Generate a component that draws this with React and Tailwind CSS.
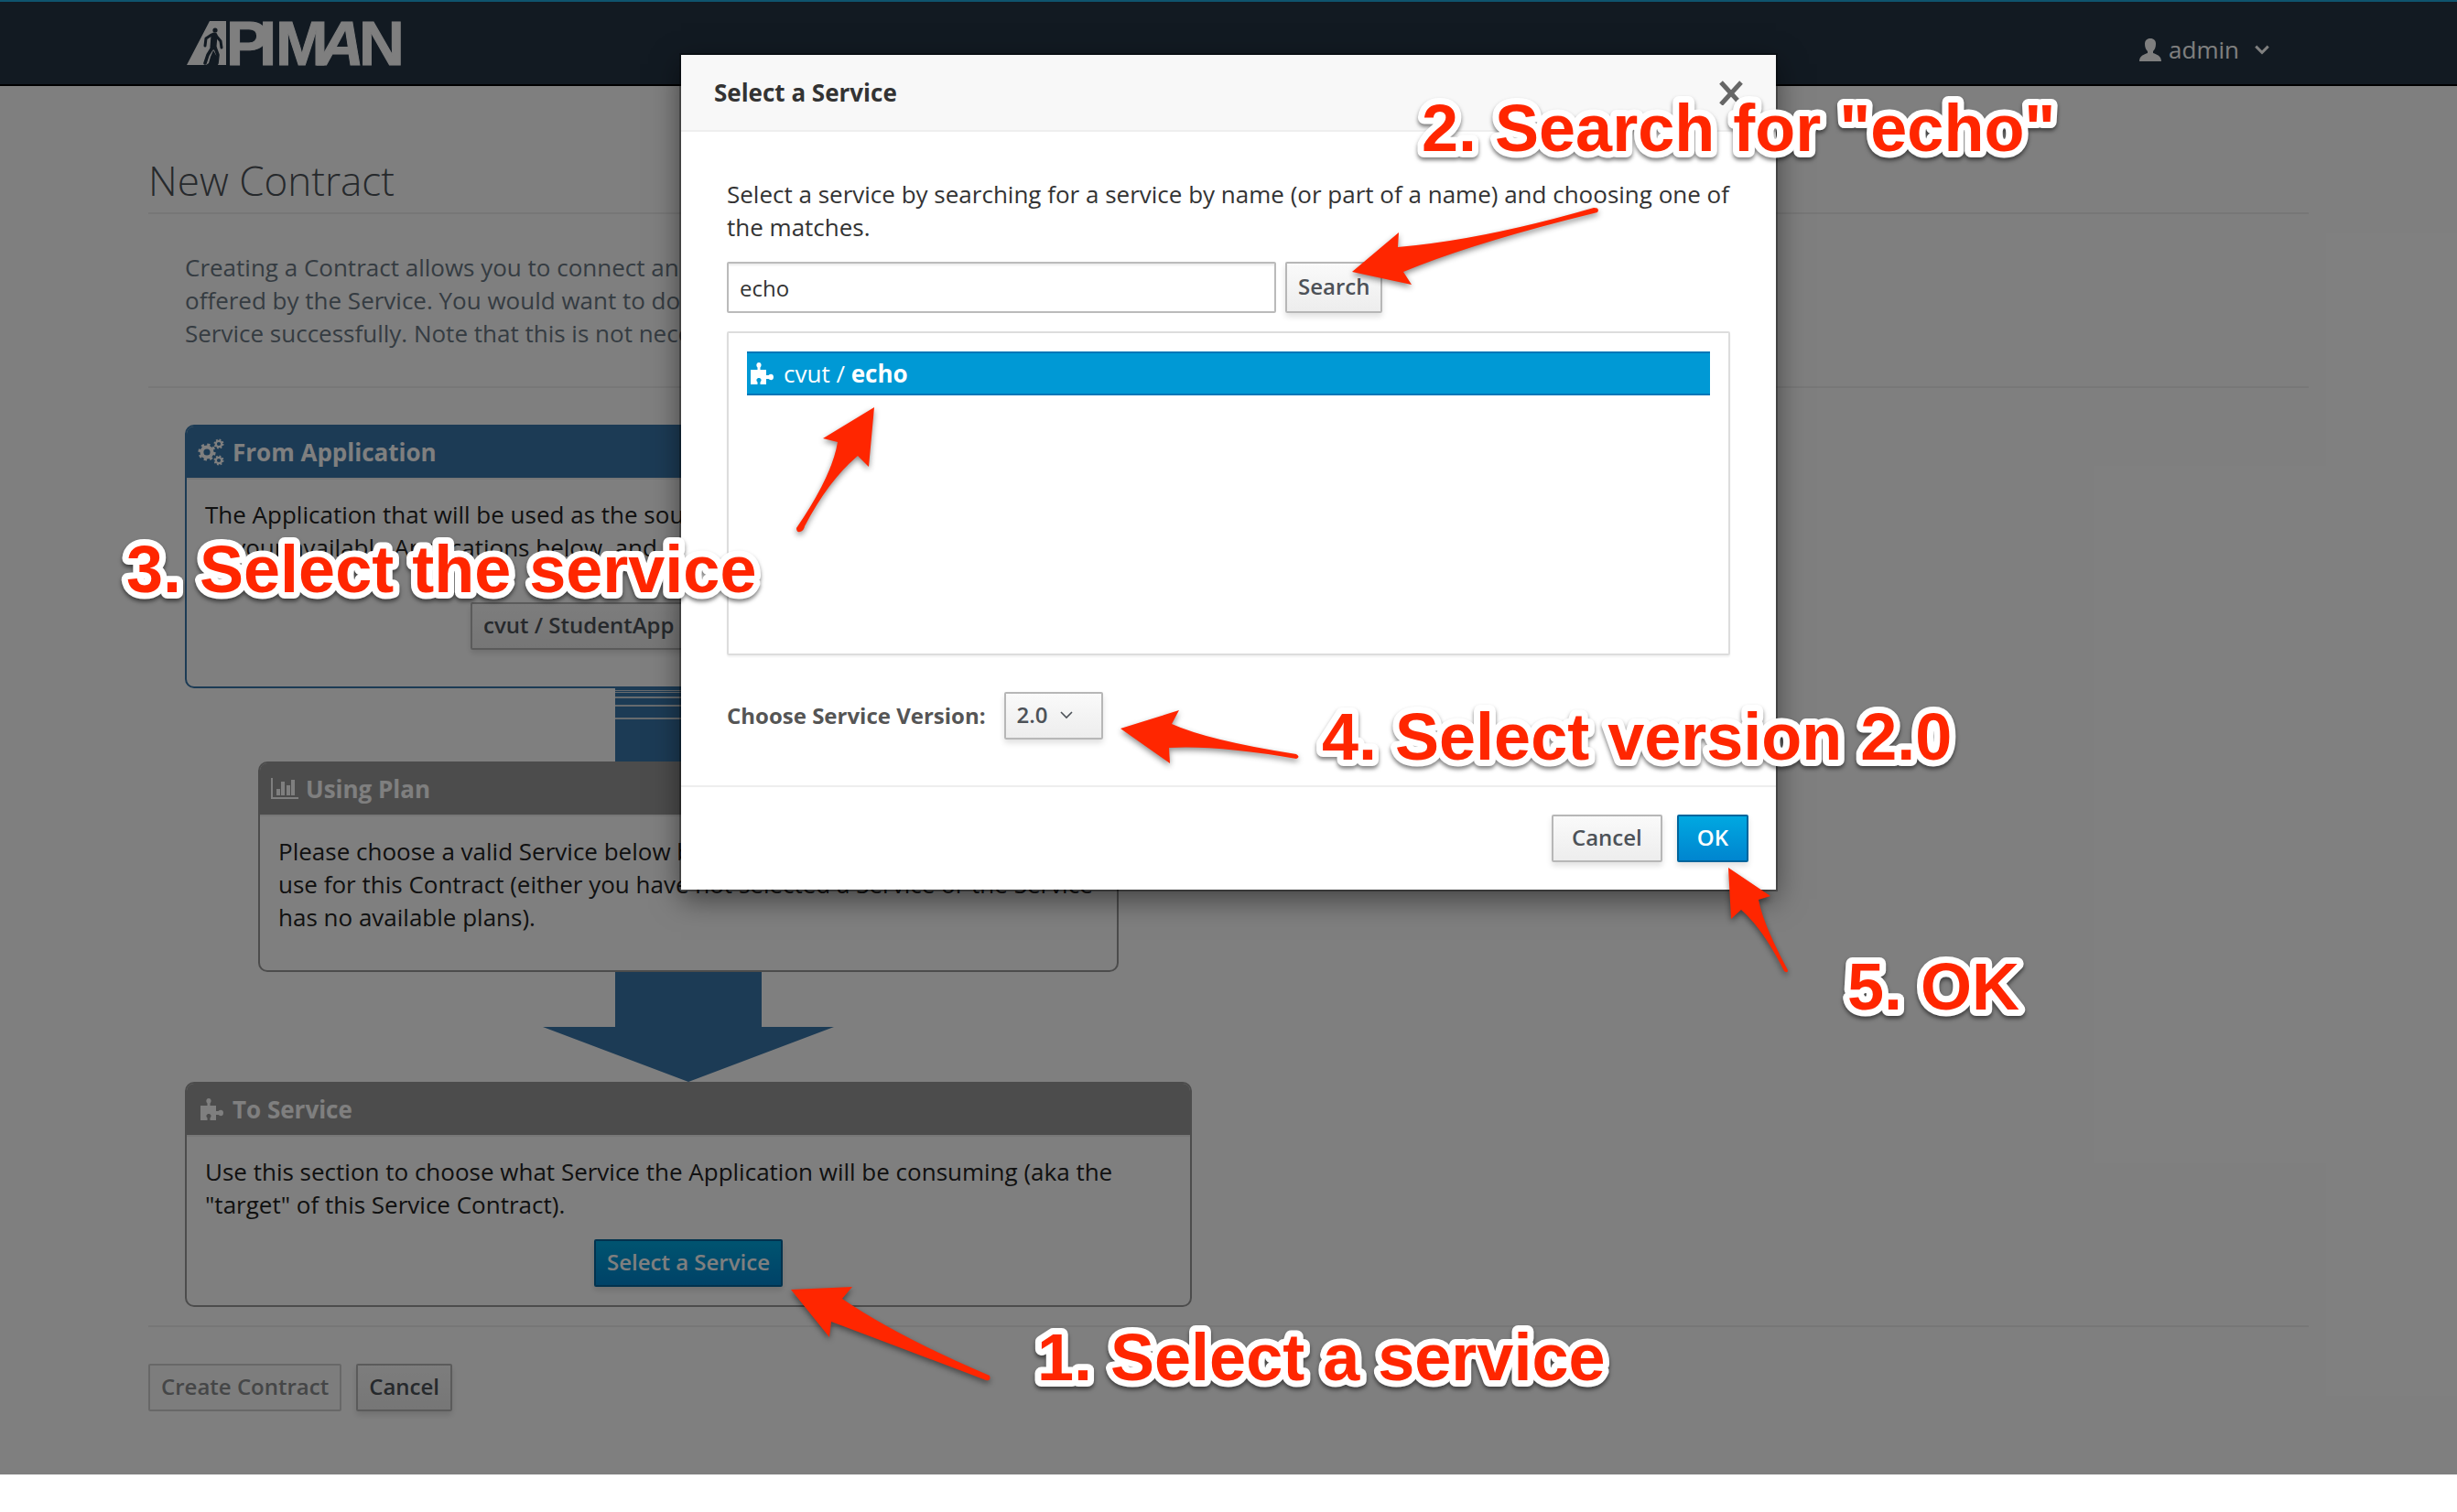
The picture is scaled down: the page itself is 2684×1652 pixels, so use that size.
import React from "react";

function Logo() {
  return (
    <svg width="260" height="80" viewBox="0 -15 260 80" role="img" aria-label="APIMAN" className="block" fill="#fff">
      <path d="M0 49 L25 1 H43 V49 H34 L33 40 L29 33 L26 40 L24 47 L21 49 Z" />
      <g fill="none" stroke="#243444" strokeLinecap="round" strokeLinejoin="round">
        <circle cx="31" cy="11" r="2.6" fill="#243444" stroke="none" />
        <path d="M30 17 L29 29" strokeWidth="7" />
        <path d="M27 16 L21 20 L20 28 M32 17 L37 23 L38 30" strokeWidth="3" />
        <path d="M28 30 L23 38 L20 47 M31 30 L34 38 L33 47" strokeWidth="3.6" />
      </g>
      <g fontFamily="Liberation Sans, Arial, sans-serif" fontWeight="700" fontSize="69" stroke="#fff" strokeWidth="1">
        <text y="49" x="43 79 97">PIM</text>
        <text y="49" x="144" fontStyle="italic">A</text>
        <text y="49" x="188">N</text>
      </g>
    </svg>
  );
}

function Gear({ cx, cy, r }) {
  const c = 2 * Math.PI * r;
  return (
    <g fill="none" stroke="currentColor">
      <circle cx={cx} cy={cy} r={r * 0.7} strokeWidth={r * 0.5} />
      <circle cx={cx} cy={cy} r={r} strokeWidth={r * 0.4} strokeDasharray={`${c / 16} ${c / 16}`} />
    </g>
  );
}

function GearsIcon() {
  return (
    <svg width="30" height="32" viewBox="0 0 30 32" aria-hidden="true">
      <Gear cx={10} cy={16} r={8} />
      <Gear cx={23} cy={7} r={4.6} />
      <Gear cx={23} cy={25} r={4.6} />
    </svg>
  );
}

function ChartIcon() {
  return (
    <svg width="30" height="24" viewBox="0 0 30 24" fill="currentColor" aria-hidden="true">
      <path d="M0 0h2v21h28v2H0z M6 12h4v7H6z M11 4h4v15h-4z M17 8h4v11h-4z M22 2h4v17h-4z" />
    </svg>
  );
}

function PuzzleIcon() {
  return (
    <svg width="25" height="24" viewBox="0 0 25 24" fill="currentColor" aria-hidden="true">
      <path d="M0 8 H7.500 V5.500 C5.400 3.400 6.400 0 9 0 C11.600 0 12.600 3.400 10.500 5.500 V8 H17 V14 H19.500 C21.500 12 25 12.500 25 16 C25 19.500 21.500 20 19.500 18 H17 V24 H10.500 V21.500 C12.500 19.500 11.500 17 9 17 C6.500 17 5.500 19.500 7.500 21.500 V24 H0 Z" />
    </svg>
  );
}

function UserIcon() {
  return (
    <svg width="24" height="25" viewBox="0 0 24 25" fill="currentColor" aria-hidden="true">
      <path d="M12 0 C16 0 18 2.500 18 6 C18 9.500 16.800 12.500 15 14 V16 C19 17.500 24 19 24 25 H0 C0 19 5 17.500 9 16 V14 C7.200 12.500 6 9.500 6 6 C6 2.500 8 0 12 0 Z" />
    </svg>
  );
}

function Chevron({ w, sw }) {
  return (
    <svg width={w} height={w} viewBox="0 0 16 16" fill="none" stroke="currentColor" strokeWidth={sw} aria-hidden="true">
      <path d="M2 5 L8 11 L14 5" />
    </svg>
  );
}

const btn = "h-[52px] pb-[2px] rounded-[2px] border-2 text-[24px] leading-[32px] font-semibold shadow-[0_4px_6px_rgba(3,3,3,0.12)] whitespace-nowrap";
const grey = "border-[#b7b7b7] bg-linear-to-b from-[#fafafa] to-[#ededed] text-[#4d5258]";
const blue = "border-[#00659c] bg-linear-to-b from-[#00a8e1] to-[#0085cf] text-white";

function Card({ tone, icon, title, className, children }) {
  const c = tone === "blue" ? "border-[#3876aa]" : "border-[#999]";
  const h = tone === "blue" ? "bg-[#3876aa]" : "bg-[#999]";
  return (
    <section className={`rounded-[10px] border-2 overflow-hidden ${c} ${className}`}>
      <h2 className={`flex items-center gap-2 h-[56px] px-3 text-[26px] leading-[36px] font-bold text-white ${h}`}>
        <span className="flex w-[30px] shrink-0 justify-center">{icon}</span>
        {title}
      </h2>
      <div className="border-t-2 border-[#eee] px-5 pt-5 text-[#222]">{children}</div>
    </section>
  );
}

function Page() {
  return (
    <div className="bg-white text-[26px] leading-[36px] text-[#333]">
      <header className="flex items-center justify-between h-[94px] border-t-2 border-t-[#1ca8dc] border-b-2 border-b-black bg-[#243444] px-[204px]">
        <Logo />
        <button className="flex items-center gap-2 pt-[14px] text-[26px] text-white">
          <UserIcon />
          admin
          <span className="pl-2"><Chevron w={18} sw={2.6} /></span>
        </button>
      </header>
      <main className="px-[162px] pt-[74px] pb-[69px]">
        <h1 className="h-[66px] border-b-2 border-[#eee] text-[44px] leading-[58px] font-light text-[#4d5258]">New Contract</h1>
        <div className="border-b-2 border-[#eee] p-10 text-[#6b7884] whitespace-nowrap">
          <p>
            Creating a Contract allows you to connect an Application to a Service via a Plan
            <br />
            offered by the Service. You would want to do this so that your App can invoke
            <br />
            Service successfully. Note that this is not necessary if the Service is public.
          </p>
        </div>
        <div className="mx-10 mt-10 flex max-w-[1100px] flex-col items-center">
          <Card tone="blue" icon={<GearsIcon />} title="From Application" className="w-full">
            <p>
              The Application that will be used as the source for the Contract. Choose one
              <br />
              of your available Applications below, and then choose a version.
            </p>
            <div className="flex justify-center pt-[42px] pb-10">
              <button className={`${btn} ${grey} w-[476px] px-3 text-left`}>cvut / StudentApp</button>
            </div>
          </Card>
          <div className="h-[80px] w-[160px] bg-[#3876aa] pt-[2px] text-[#cfd6dc]">
            <svg width="160" height="40" viewBox="0 0 160 40" fill="currentColor" aria-hidden="true">
              <path d="M0 0h160v1H0z M0 2h160v1H0z M0 7h160v2H0z M0 16h160v2H0z M0 30h160v2H0z" />
            </svg>
          </div>
          <Card tone="grey" icon={<ChartIcon />} title="Using Plan" className="w-[940px]">
            <p className="pb-10">
              Please choose a valid Service below before choosing a Plan to
              <br />
              use for this Contract (either you have not selected a Service or the Service has no available plans).
            </p>
          </Card>
          <svg width="318" height="120" viewBox="0 0 318 120" fill="#3876aa" aria-hidden="true">
            <path d="M79 0H239V60H318L159 120L0 60H79Z" />
          </svg>
          <Card tone="grey" icon={<PuzzleIcon />} title="To Service" className="w-full">
            <p>Use this section to choose what Service the Application will be consuming (aka the &quot;target&quot; of this Service Contract).</p>
            <div className="flex justify-center py-5">
              <button className={`${btn} ${blue} px-3`}>Select a Service</button>
            </div>
          </Card>
        </div>
        <div className="mt-5 flex gap-4 border-t-2 border-[#eee] pt-10">
          <button disabled className="h-[52px] rounded-[2px] border-2 border-[#d1d1d1] bg-[#fafafa] px-3 pb-[2px] text-[24px] leading-[32px] font-semibold text-[#8b8d8f]">Create Contract</button>
          <button className={`${btn} ${grey} px-3`}>Cancel</button>
        </div>
      </main>
    </div>
  );
}

function Modal() {
  return (
    <div role="dialog" aria-labelledby="dlg" className="w-[1196px] bg-white text-[26px] leading-[36px] text-[#333] shadow-[0_10px_30px_rgba(0,0,0,0.5),0_0_0_2px_rgba(0,0,0,0.3)]">
      <div className="flex h-[84px] items-center justify-between border-b-2 border-[#eee] bg-[#f8f8f8] px-9">
        <h2 id="dlg" className="font-bold">Select a Service</h2>
        <button aria-label="Close" className="text-[#666]">
          <svg width="26" height="28" viewBox="0 0 26 28" stroke="currentColor" strokeWidth="5" aria-hidden="true">
            <path d="M2 3L24 27M24 3L2 27" />
          </svg>
        </button>
      </div>
      <div className="px-[50px] pt-[50px]">
        <p>Select a service by searching for a service by name (or part of a name) and choosing one of the matches.</p>
        <div className="mt-5 flex gap-[10px]">
          <input aria-label="Service name" defaultValue="echo" className="h-[56px] w-[600px] rounded-[2px] border-2 border-[#bbb] px-3 text-[24px] shadow-[inset_0_2px_2px_rgba(3,3,3,0.075)] outline-none" />
          <button className="h-[56px] rounded-[2px] border-2 border-[#b7b7b7] bg-linear-to-b from-[#fafafa] to-[#ededed] px-3 pb-[2px] text-[24px] font-semibold text-[#4d5258] shadow-[0_4px_6px_rgba(3,3,3,0.12)]">Search</button>
        </div>
        <ul className="mt-5 h-[354px] rounded-[2px] border-2 border-[#ddd] p-5 shadow-[0_2px_2px_rgba(0,0,0,0.05)]">
          <li>
            <button className="flex h-[48px] w-full items-center gap-[11px] border-y-2 border-[#0076b7] bg-[#0099d5] px-1 text-left text-white">
              <PuzzleIcon />
              <span>cvut / <b>echo</b></span>
            </button>
          </li>
        </ul>
        <div className="flex items-center gap-5 pt-10 pb-[50px]">
          <span className="text-[24px] font-bold text-[#555]">Choose Service Version:</span>
          <button className={`${btn} ${grey} flex w-[108px] items-center gap-3 px-3`}>2.0 <Chevron w={16} sw={1.6} /></button>
        </div>
      </div>
      <div className="flex h-[114px] justify-end gap-4 border-t-2 border-[#eee] pt-[30px] pr-[30px]">
        <button className={`${btn} ${grey} px-5`}>Cancel</button>
        <button className={`${btn} ${blue} px-5`}>OK</button>
      </div>
    </div>
  );
}

const notes = [
  { x: 1553, y: 165, text: '2. Search for "echo"' },
  { x: 138, y: 647, text: "3. Select the service" },
  { x: 1444, y: 830, text: "4. Select version 2.0" },
  { x: 2018, y: 1103, text: "5. OK" },
  { x: 1133, y: 1508, text: "1. Select a service" },
];

function Annotations() {
  return (
    <svg width="2684" height="1652" viewBox="0 0 2684 1652" fill="#ff2600" className="pointer-events-none absolute top-0 left-0">
      <g className="drop-shadow-[0_3px_3px_rgba(0,0,0,0.45)]">
        <path d="M1477 297L1528 254L1527 270Q1620 262 1741 227Q1748 227 1745 232Q1610 265 1533 297L1542 311Z" />
        <path d="M955 445L899 479L915 483Q909 520 870 577Q870 582 874 581Q878 580 879 575Q905 525 937 498L949 510Z" />
        <path d="M1224 796L1288 776L1280 791Q1320 809 1416 824Q1421 827 1416 829Q1330 814 1277 817L1278 834Z" />
        <path d="M1888 948L1934 979L1921 983Q1926 1010 1953 1060Q1953 1064 1949 1061Q1926 1015 1902 994L1891 1004Z" />
        <path d="M864 1409L931 1406L920 1419Q980 1460 1081 1503Q1083 1509 1077 1508Q982 1472 908 1444L906 1461Z" />
      </g>
      <g
        className="drop-shadow-[0_3px_2px_rgba(0,0,0,0.5)]"
        fontFamily="Liberation Sans, Arial, sans-serif"
        fontWeight="700"
        fontSize="72"
        stroke="#fff"
        strokeWidth="14"
        strokeLinejoin="round"
        paintOrder="stroke"
      >
        {notes.map((n) => (
          <text key={n.text} x={n.x} y={n.y}>{n.text}</text>
        ))}
      </g>
    </svg>
  );
}

export default function App() {
  return (
    <div className="relative min-h-screen overflow-hidden bg-white font-['Open_Sans','Noto_Sans',sans-serif]">
      <div className="relative">
        <Page />
        <div className="absolute inset-0 flex items-start justify-center overflow-hidden bg-black/50 pt-[60px]">
          <Modal />
        </div>
      </div>
      <Annotations />
    </div>
  );
}
